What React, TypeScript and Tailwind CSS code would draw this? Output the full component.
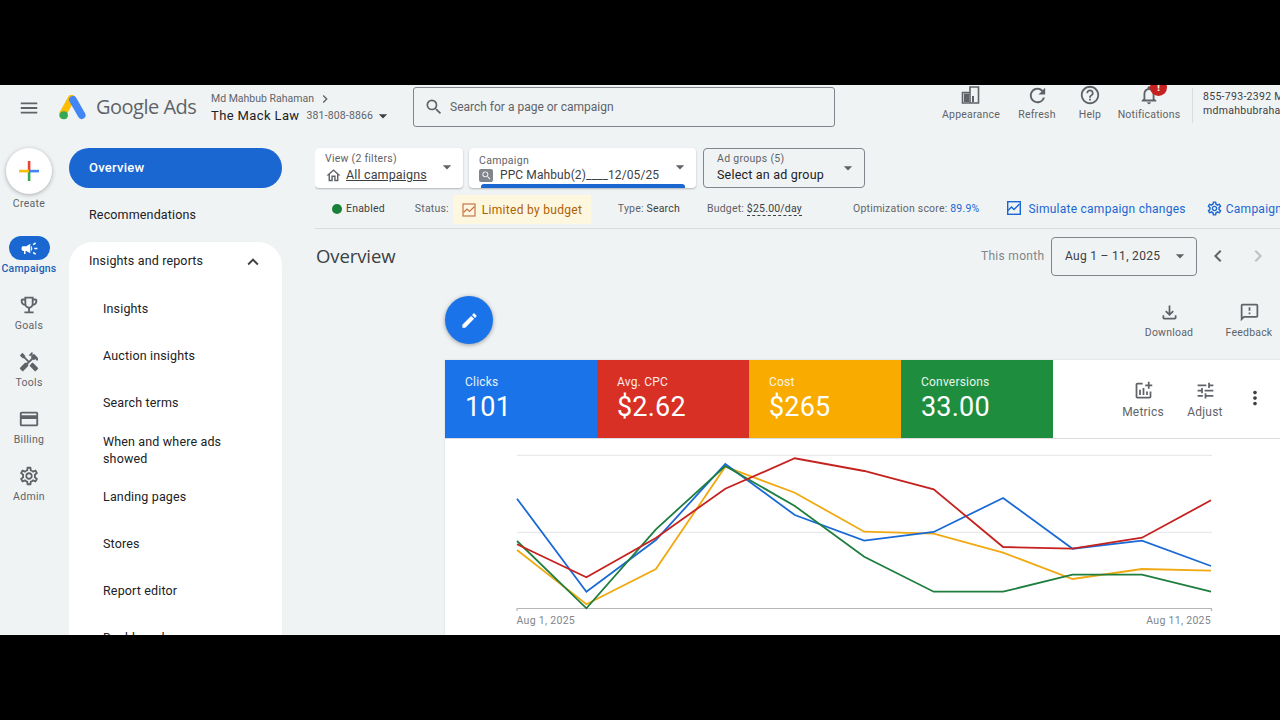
import React from "react";
import {
  MdCampaign, MdOutlineEmojiEvents, MdHandyman, MdCreditCard, MdOutlineSettings, MdRefresh, MdHelpOutline,
  MdOutlineNotifications, MdSearch, MdOutlineHome, MdEdit, MdOutlineFileDownload, MdOutlineFeedback,
  MdOutlineAddchart, MdTune, MdMoreVert, MdExpandLess, MdChevronLeft, MdChevronRight, MdMenu, MdArrowDropDown,
} from "react-icons/md";

const xs = [517, 586.4, 655.9, 725.3, 794.8, 864.2, 933.7, 1003.1, 1072.6, 1142, 1211];
const series: [string, number[]][] = [
  ["#f0a911", [550, 604.3, 569, 466.7, 492.7, 531.7, 533.7, 552.7, 579, 569, 570.7]],
  ["#1a6ad6", [498.7, 591.7, 540, 464, 515, 540.7, 532, 498, 548.7, 540.7, 566]],
  ["#1e7e3e", [541, 608.3, 529.3, 466, 506, 556.7, 591.7, 591.7, 574.7, 574.7, 591.7]],
  ["#c5221f", [544.3, 577.3, 538, 488.7, 458.3, 471, 489.3, 547, 548.7, 537.7, 500.3]],
];

const rail = [
  { icon: <MdOutlineEmojiEvents size={22} />, label: "Goals" },
  { icon: <MdHandyman size={22} />, label: "Tools" },
  { icon: <MdCreditCard size={22} />, label: "Billing" },
  { icon: <MdOutlineSettings size={22} />, label: "Admin" },
];

const cards = [
  { label: "Clicks", value: "101", bg: "bg-[#1a73e8]" },
  { label: "Avg. CPC", value: "$2.62", bg: "bg-[#d93025]" },
  { label: "Cost", value: "$265", bg: "bg-[#f9ab00]" },
  { label: "Conversions", value: "33.00", bg: "bg-[#1e8e3e]" },
];

function TopAction({ icon, label, w }: { icon: React.ReactNode; label: string; w: string }) {
  return (
    <div className={`flex flex-col items-center shrink-0 ${w}`}>
      <div className="h-[24px] flex items-center justify-center text-[#5f6368]">{icon}</div>
      <div className="text-[10.5px] leading-[14px] mt-[1px] tracking-[0.2px] text-[#5f6368] whitespace-nowrap">{label}</div>
    </div>
  );
}

function SubNav({ children }: { children: React.ReactNode }) {
  return <div className="h-[47px] pl-[34px] flex items-center text-[12.5px] text-[#202124] tracking-[0.15px]">{children}</div>;
}

export default function App() {
  return (
    <div className="h-screen w-full bg-black flex flex-col justify-center overflow-hidden font-['Roboto',sans-serif]">
      <div className="h-[550px] bg-[#f0f3f4] overflow-hidden flex flex-col">
        {/* Header */}
        <header className="h-[45px] shrink-0 flex items-center relative">
          <MdMenu size={22} className="ml-[18px] text-[#5f6368] shrink-0" />
          <svg width="27" height="26" viewBox="0 0 28 26" className="ml-[19px] shrink-0">
            <path d="M13 3 L3.5 20" stroke="#fbbc04" strokeWidth="7.5" strokeLinecap="round" />
            <path d="M14.5 4.5 L23.5 20.5" stroke="#4285f4" strokeWidth="8" strokeLinecap="round" />
            <circle cx="5" cy="20.5" r="4.2" fill="#34a853" />
          </svg>
          <span className="ml-[10px] text-[20px] text-[#5f6368] whitespace-nowrap shrink-0 w-[101px] -mt-[2px] font-['Open_Sans',sans-serif] tracking-[-0.5px]">Google Ads</span>
          <div className="ml-[14px] w-[202px] shrink-0 flex flex-col mt-[1px]">
            <div className="flex items-center text-[10.5px] leading-[14px] text-[#5f6368] tracking-[0px] whitespace-nowrap">
              Md Mahbub Rahaman
              <MdChevronRight size={16} className="ml-[3px]" />
            </div>
            <div className="flex items-center leading-[16px] whitespace-nowrap -mt-[1px]">
              <span className="text-[13px] text-[#202124] tracking-[0.38px]">The Mack Law</span>
              <span className="ml-[7px] text-[10.5px] text-[#5f6368] tracking-[0.15px]">381-808-8866</span>
              <MdArrowDropDown size={20} className="text-[#3c4043]" />
            </div>
          </div>
          <div className="w-[422px] h-[40px] -mt-[2px] shrink-0 border border-[#80868b] rounded-[3px] flex items-center pl-[10px]">
            <MdSearch size={20} className="text-[#5f6368]" />
            <span className="ml-[6px] text-[12px] tracking-[0px] text-[#5f6368]">Search for a page or campaign</span>
          </div>
          <div className="ml-[101px] flex items-start shrink-0 -mt-[9px]">
            <TopAction w="w-[70px]" label="Appearance" icon={
              <svg width="20" height="20" viewBox="0 0 20 20" fill="none" stroke="#5f6368" strokeWidth="1.6">
                <path d="M1.5 18V7.5H9V18ZM9 18V2H17.5V18Z" />
                <path d="M3 8.5H8V17H3Z" fill="#5f6368" stroke="none" />
                <path d="M11 17V11H13V17Z" fill="#5f6368" stroke="none" />
              </svg>} />
            <TopAction w="w-[62px]" label="Refresh" icon={<MdRefresh size={23} />} />
            <TopAction w="w-[44px]" label="Help" icon={<MdHelpOutline size={22} />} />
            <div className="ml-[2px]">
              <TopAction w="w-[70px]" label="Notifications" icon={
                <span className="relative flex">
                  <MdOutlineNotifications size={22} />
                  <span className="absolute -top-[5px] left-[12px] w-[17px] h-[17px] rounded-full bg-[#c5221f] text-white text-[11px] font-bold leading-[17px] text-center">!</span>
                </span>} />
            </div>
            <div className="ml-[8px] h-[35px] mt-[5px] border-l border-[#dadce0]" />
            <div className="ml-[10px] mt-[7px] text-[10.5px] leading-[14px] text-[#3c4043] tracking-[0.3px] whitespace-nowrap">
              <div>855-793-2392 Mahbub</div>
              <div>mdmahbubrahaman@gmail.com</div>
            </div>
          </div>
        </header>

        {/* Body */}
        <div className="flex-1 min-h-0 flex">
          {/* Rail */}
          <aside className="w-[58px] shrink-0 flex flex-col items-center pt-[18px] ml-0">
            <div className="w-[46px] h-[46px] rounded-full bg-white shadow-[0_1px_4px_rgba(60,64,67,0.4)] flex items-center justify-center">
              <svg width="22" height="22" viewBox="0 0 22 22">
                <rect x="9.8" y="1" width="2.6" height="10" fill="#ea4335" />
                <rect x="9.8" y="11" width="2.6" height="10" fill="#34a853" />
                <rect x="1" y="9.8" width="10" height="2.6" fill="#fbbc04" />
                <rect x="11" y="9.8" width="10" height="2.6" fill="#4285f4" />
              </svg>
            </div>
            <div className="text-[10.5px] leading-[14px] mt-[3px] tracking-[0.3px] text-[#5f6368]">Create</div>
            <div className="mt-[25px] w-[41px] h-[24px] rounded-full bg-[#1a67d2] flex items-center justify-center text-white">
              <MdCampaign size={19} />
            </div>
            <div className="text-[10.5px] leading-[14px] mt-[2px] tracking-[0.2px] font-medium text-[#1a5fb4]">Campaigns</div>
            {rail.map((r) => (
              <div key={r.label} className="flex flex-col items-center mt-[16px] h-[41px] text-[#5f6368]">
                <div className="h-[26px] flex items-center">{r.icon}</div>
                <div className="text-[10.5px] leading-[14px] mt-[1px] tracking-[0.3px]">{r.label}</div>
              </div>
            ))}
          </aside>

          {/* Nav */}
          <nav className="w-[213px] ml-[11px] shrink-0 pt-[18px]">
            <div className="h-[40px] rounded-full bg-[#1a67d2] text-white text-[13px] font-medium tracking-[0.25px] flex items-center pl-[20px]">Overview</div>
            <div className="h-[54px] pl-[20px] flex items-center text-[12.5px] text-[#202124] tracking-[0.15px]">Recommendations</div>
            <div className="bg-white rounded-t-[24px] h-[500px]">
              <div className="h-[44px] pb-[5px] pl-[20px] pr-[18px] flex items-center justify-between text-[12.5px] text-[#202124] tracking-[0.15px]">
                Insights and reports
                <MdExpandLess size={22} className="text-[#3c4043]" />
              </div>
              <SubNav>Insights</SubNav>
              <SubNav>Auction insights</SubNav>
              <SubNav>Search terms</SubNav>
              <div className="h-[47px] pb-[2px] pl-[34px] pr-[40px] flex items-center text-[12.5px] leading-[17px] text-[#202124] tracking-[0.15px]">When and where ads showed</div>
              <SubNav>Landing pages</SubNav>
              <SubNav>Stores</SubNav>
              <SubNav>Report editor</SubNav>
              <SubNav>Dashboards</SubNav>
            </div>
          </nav>

          {/* Main */}
          <main className="flex-1 min-w-0 ml-[33px] pt-[18px] overflow-hidden">
            {/* Filters */}
            <div className="flex h-[40px] w-[1000px]">
              <div className="w-[148px] bg-white rounded-[4px] shadow-[0_1px_2px_rgba(60,64,67,0.35)] pl-[10px] pr-[8px] flex items-center justify-between">
                <div>
                  <div className="text-[10.5px] leading-[14px] tracking-[0.25px] text-[#5f6368]">View (2 filters)</div>
                  <div className="flex items-center text-[12.5px] leading-[18px] tracking-[0.15px] text-[#3c4043]">
                    <MdOutlineHome size={17} className="mr-[4px] text-[#5f6368]" />
                    <span className="underline">All campaigns</span>
                  </div>
                </div>
                <MdArrowDropDown size={20} className="text-[#5f6368] -mt-[2px] -mr-[2px]" />
              </div>
              <div className="relative ml-[6px] w-[227px] bg-white rounded-[4px] shadow-[0_1px_2px_rgba(60,64,67,0.35)] pl-[10px] pr-[6px] flex items-center justify-between">
                <div>
                  <div className="text-[10.5px] leading-[14px] tracking-[0.3px] text-[#5f6368] mt-[1px]">Campaign</div>
                  <div className="flex items-center text-[12px] leading-[17px] tracking-[0.1px] text-[#3c4043] whitespace-nowrap -mt-[1px]">
                    <span className="w-[14px] h-[13px] mr-[7px] rounded-[2px] bg-[#80868b] flex items-center justify-center text-white">
                      <MdSearch size={11} />
                    </span>
                    PPC Mahbub(2)____12/05/25
                  </div>
                </div>
                <MdArrowDropDown size={20} className="text-[#5f6368] -mt-[3px]" />
                <div className="absolute left-[12px] right-[11px] bottom-0 h-[4px] bg-[#1a67d2] rounded-t-[3px]" />
              </div>
              <div className="ml-[7px] w-[162px] border border-[#80868b] rounded-[4px] pl-[13px] pr-[6px] flex items-center justify-between">
                <div>
                  <div className="text-[10.5px] leading-[14px] tracking-[0.3px] text-[#5f6368]">Ad groups (5)</div>
                  <div className="text-[12.5px] leading-[18px] tracking-[0.2px] text-[#202124] whitespace-nowrap">Select an ad group</div>
                </div>
                <MdArrowDropDown size={20} className="text-[#5f6368] -mt-[1px]" />
              </div>
            </div>

            {/* Status row */}
            <div className="h-[33px] mt-[4px] mb-[3px] w-[1200px] flex items-center text-[10.5px] tracking-[0.2px] text-[#5f6368] whitespace-nowrap">
              <span className="ml-[17px] w-[10px] h-[10px] rounded-full bg-[#188038] shrink-0" />
              <span className="ml-[4px] text-[#3c4043]">Enabled</span>
              <span className="ml-[30px]">Status:</span>
              <span className="ml-[4px] w-[138px] shrink-0 h-[29px] mt-[2px] bg-[#fef7e0] flex items-center pl-[9px] text-[12px] tracking-[0.3px] text-[#b06000]">
                <svg width="14" height="14" viewBox="0 0 14 14" fill="none" stroke="#c5744a" strokeWidth="1.2" className="mr-[6px]">
                  <rect x="1" y="1" width="12" height="12" />
                  <path d="M1.5 9.5 L5 6 L7.5 8.5 L12.5 3.5" />
                </svg>
                Limited by budget
              </span>
              <span className="ml-[27px]">Type: <span className="text-[#3c4043]">Search</span></span>
              <span className="ml-[27px]">Budget: <span className="text-[#3c4043] border-b border-dashed border-[#3c4043]">$25.00/day</span></span>
              <span className="ml-[51px]">Optimization score: <span className="text-[#1a67d2]">89.9%</span></span>
              <svg width="16" height="16" viewBox="0 0 16 16" fill="none" stroke="#1a67d2" strokeWidth="1.4" className="ml-[27px] -mt-[2px] shrink-0">
                <rect x="1.7" y="1.7" width="12.6" height="12.6" />
                <path d="M2 10.5 L5.5 7 L8 9.5 L13.5 4" />
              </svg>
              <span className="ml-[6px] text-[12px] tracking-[0.25px] text-[#1a67d2]">Simulate campaign changes</span>
              <MdOutlineSettings size={17} className="ml-[20px] text-[#1a67d2] shrink-0" />
              <span className="ml-[3px] text-[12px] tracking-[0.25px] text-[#1a67d2]">Campaign settings</span>
            </div>
            <div className="border-t border-[#dadce0]" />

            {/* Overview title */}
            <div className="flex items-center h-[48px] mt-[3px]">
              <div className="text-[18.5px] text-[#3c4043] font-['Open_Sans',sans-serif] tracking-[-0.1px] w-[666px] shrink-0 -mt-[1px] pl-[1px]">Overview</div>
              <div className="text-[12px] tracking-[0.3px] text-[#80868b] w-[70px] shrink-0">This month</div>
              <div className="w-[146px] h-[39px] shrink-0 border border-[#80868b] rounded-[4px] flex items-center pl-[13px] pr-[6px] justify-between text-[12px] tracking-[0.3px] text-[#3c4043]">
                Aug 1 – 11, 2025
                <MdArrowDropDown size={20} className="text-[#5f6368]" />
              </div>
              <MdChevronLeft size={24} className="ml-[9px] text-[#5f6368] shrink-0" />
              <MdChevronRight size={24} className="ml-[16px] text-[#bdc1c6] shrink-0" />
            </div>

            {/* Analysis */}
            <div className="ml-[130px] w-[835px]">
              <div className="flex items-start h-[64px] mt-[16px]">
                <div className="w-[48px] h-[48px] rounded-full bg-[#1a73e8] shadow-[0_1px_4px_rgba(60,64,67,0.5)] flex items-center justify-center text-white shrink-0">
                  <MdEdit size={19} />
                </div>
                <div className="ml-[646px] mt-[6px] flex flex-col items-center text-[#5f6368] w-[60px] shrink-0">
                  <MdOutlineFileDownload size={21} />
                  <span className="text-[10.5px] leading-[14px] mt-[3px] tracking-[0.2px]">Download</span>
                </div>
                <div className="ml-[20px] mt-[6px] flex flex-col items-center text-[#5f6368] w-[60px] shrink-0">
                  <MdOutlineFeedback size={21} />
                  <span className="text-[10.5px] leading-[14px] mt-[3px] tracking-[0.2px]">Feedback</span>
                </div>
              </div>
              <div className="bg-white shadow-[0_0_2px_rgba(60,64,67,0.15)]">
                <div className="h-[79px] flex border-b border-[#dadce0]">
                  {cards.map((c) => (
                    <div key={c.label} className={`w-[152px] shrink-0 pl-[20px] pt-[15px] text-white ${c.bg}`}>
                      <div className="text-[12px] leading-[15px] tracking-[0.2px] opacity-90">{c.label}</div>
                      <div className="text-[27px] leading-[32px] mt-[1px] tracking-[0.2px]">{c.value}</div>
                    </div>
                  ))}
                  <div className="flex items-start text-[#5f6368] pt-[20px]">
                    <div className="ml-[64px] w-[52px] flex flex-col items-center">
                      <MdOutlineAddchart size={21} />
                      <span className="text-[12px] leading-[15px] mt-[4px] tracking-[0.2px]">Metrics</span>
                    </div>
                    <div className="ml-[10px] w-[52px] flex flex-col items-center">
                      <MdTune size={21} />
                      <span className="text-[12px] leading-[15px] mt-[4px] tracking-[0.2px]">Adjust</span>
                    </div>
                    <MdMoreVert size={22} className="ml-[13px] mt-[7px] text-[#3c4043]" />
                  </div>
                </div>
                <svg width="835" height="197" viewBox="445 439 835 197" className="block">
                  <line x1="517" x2="1212" y1="455.3" y2="455.3" stroke="#e3e4e6" strokeWidth="1" />
                  <line x1="517" x2="1212" y1="532.3" y2="532.3" stroke="#e3e4e6" strokeWidth="1" />
                  <path d="M517 611 V608.5 H1211.5 V611" fill="none" stroke="#b4b6b9" strokeWidth="1.2" />
                  {series.map(([color, ys]) => (
                    <polyline key={color} fill="none" stroke={color} strokeWidth="1.8" points={ys.map((y, i) => `${xs[i]},${y}`).join(" ")} />
                  ))}
                  <text x="516.5" y="623.5" fontSize="10.5" letterSpacing="0.3" fill="#80868b" fontFamily="Roboto, sans-serif">Aug 1, 2025</text>
                  <text x="1211" y="623.5" fontSize="10.5" letterSpacing="0.3" fill="#80868b" textAnchor="end" fontFamily="Roboto, sans-serif">Aug 11, 2025</text>
                </svg>
              </div>
            </div>
          </main>
        </div>
      </div>
    </div>
  );
}
